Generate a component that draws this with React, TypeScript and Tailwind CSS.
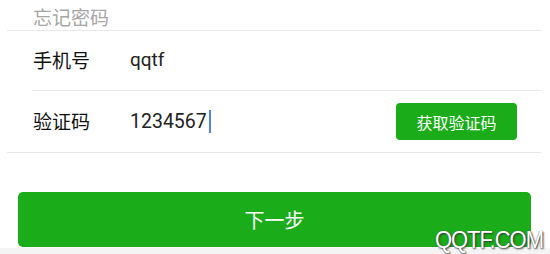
import React from 'react';

const cjk = { fontFamily: '"Noto Sans CJK SC", "Noto Sans", sans-serif' };
const latin = { fontFamily: 'Roboto, "Noto Sans CJK SC", sans-serif' };

export default function App() {
  return (
    <div className="relative w-[550px] h-[254px] bg-white overflow-hidden" style={cjk}>
      <div className="h-[248px] bg-white">
        <div className="ml-[7px] w-[534px]">
          <div className="h-[31px] pl-[26px] pt-[7px] text-[19px] leading-[20px] text-[#a6a6a6] border-b border-[#e8e8e8]">
            忘记密码
          </div>
          <div className="pl-[25px]">
            {/* 手机号 */}
            <div className="h-[60px] flex items-center border-b border-[#e8e8e8]">
              <span className="w-[98px] pl-px text-[19px] text-[#111]">手机号</span>
              <span className="text-[19px] text-[#222]" style={latin}>qqtf</span>
            </div>
            {/* 验证码 */}
            <div className="h-[61px] flex items-center">
              <span className="w-[98px] pl-px text-[19px] text-[#111]">验证码</span>
              <span className="flex items-center text-[19.5px] text-[#222]" style={latin}>
                1234567
                <span className="ml-[2px] inline-block w-[2px] h-[23px] bg-[#4a86e8]" />
              </span>
              <button className="ml-auto mr-[24px] w-[121px] h-[37px] rounded-[4px] bg-[#1aad19] text-white text-[16px]">
                获取验证码
              </button>
            </div>
          </div>
          <div className="border-b border-[#e8e8e8]" />
        </div>
        <div className="px-[18px] pt-[39px] w-[549px]">
          <button className="w-full h-[55px] rounded-[5px] bg-[#1aad19] text-white text-[20px]">
            下一步
          </button>
        </div>
      </div>
      <div className="h-[6px] bg-[#f4f4f4]" />
      <div
        className="absolute right-[7px] bottom-[1px] text-[22px] leading-[24px] text-white tracking-[-1px] scale-y-110 origin-bottom"
        style={{ fontFamily: '"Liberation Sans", Arial, sans-serif', textShadow: '1px 1px 2px #333, 0 0 1px #555' }}
      >
        QQTF.COM
      </div>
    </div>
  );
}
